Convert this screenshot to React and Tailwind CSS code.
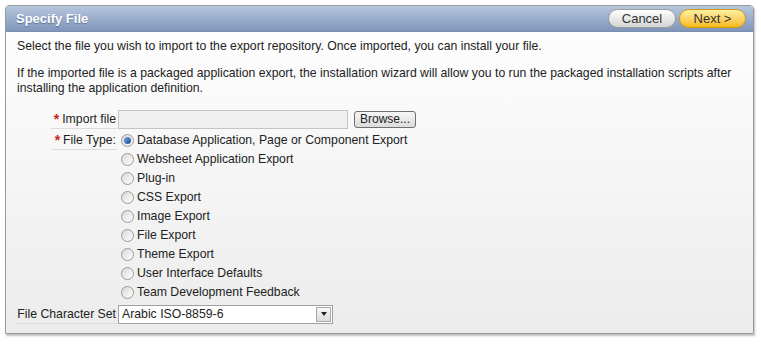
import React from "react";

const options = [
  "Database Application, Page or Component Export",
  "Websheet Application Export",
  "Plug-in",
  "CSS Export",
  "Image Export",
  "File Export",
  "Theme Export",
  "User Interface Defaults",
  "Team Development Feedback",
];

function Radio({ checked }) {
  return (
    <span className="relative inline-flex h-[13px] w-[13px] shrink-0 items-center justify-center rounded-full border border-[#9a9a9a] bg-gradient-to-br from-[#d8d8d8] to-[#ffffff]">
      {checked && (
        <span className="h-[7px] w-[7px] rounded-full bg-gradient-to-br from-[#6fa2e0] to-[#1c4f9c]" />
      )}
    </span>
  );
}

function Label({ children, req }) {
  return (
    <span className="inline-flex items-center border-b border-[#dcdcdc] pl-[3px] pr-[1px] leading-[18px]">
      {req && <span className="mr-[3px] text-[14px] font-bold leading-[10px] text-[#c81e1e]">*</span>}
      {children}
    </span>
  );
}

export default function App() {
  return (
    <div className="min-h-[345px] w-[761px] bg-white pt-[5px] pl-[5px] text-[12.25px] text-[#222]" style={{ fontFamily: '"Liberation Sans", Arial, sans-serif' }}>
      <div className="w-[749px] rounded-t-[4px] border border-[#9a9a9a] bg-gradient-to-b from-[#ffffff] to-[#ececec] shadow-[1px_2px_2px_rgba(0,0,0,0.25)]">
        <div className="flex h-[26px] items-center justify-between rounded-t-[3px] border-b border-[#7a8eae] bg-gradient-to-b from-[#b7c6de] to-[#7f96ba] pl-[10px] pr-[7px]">
          <span className="text-[13px] font-bold text-white [text-shadow:0_1px_1px_rgba(40,60,100,0.5)]">Specify File</span>
          <div className="flex gap-[3px]">
            <button className="flex h-[19px] w-[68px] items-center justify-center rounded-full border border-[#9c9c9c] bg-gradient-to-b from-[#ffffff] to-[#d4d4d4] text-[13px] text-[#333]">Cancel</button>
            <button className="flex h-[19px] w-[67px] items-center justify-center rounded-full border border-[#d19a1a] bg-gradient-to-b from-[#fff0a0] to-[#f7b900] text-[13px] text-[#333]">Next &gt;</button>
          </div>
        </div>
        <div className="pt-[7px] pb-[7px] pl-[11px] pr-[8px]">
          <p className="mb-[12px] leading-[15px]">Select the file you wish to import to the export repository. Once imported, you can install your file.</p>
          <p className="mb-[11px] leading-[15px]">If the imported file is a packaged application export, the installation wizard will allow you to run the packaged installation scripts after installing the application definition.</p>
          <div className="grid grid-cols-[100px_1fr]">
            <div className="flex h-[24px] items-center justify-end">
              <Label req>Import file</Label>
            </div>
            <div className="flex h-[24px] items-center pl-[1px]">
              <div className="h-[19px] w-[230px] border border-[#c4c4c4] bg-[#f0f0f0]" />
              <button className="ml-[6px] flex h-[17px] w-[62px] items-center justify-center rounded-[3px] border border-[#707070] bg-gradient-to-b from-[#f6f6f6] to-[#dcdcdc] text-[12px] text-[#222]">Browse...</button>
            </div>
            <div className="flex h-[19px] items-center justify-end">
              <Label req>File Type:</Label>
            </div>
            <div className="flex flex-col">
              {options.map((o, i) => (
                <div key={o} className="flex h-[19px] items-center gap-[3px] pl-[4px]">
                  <Radio checked={i === 0} />
                  <span>{o}</span>
                </div>
              ))}
            </div>
            <div className="flex h-[24px] items-center justify-end">
              <span className="border-b border-[#dcdcdc] pr-[1px] leading-[18px]">File Character Set</span>
            </div>
            <div className="flex h-[24px] items-center pl-[1px]">
              <div className="flex h-[19px] w-[215px] items-center justify-between border border-[#a0a0a0] bg-white pl-[3px] pr-[1px]">
                <span>Arabic ISO-8859-6</span>
                <span className="flex h-[15px] w-[15px] items-center justify-center border border-[#a8a8a8] bg-gradient-to-b from-[#f8f8f8] to-[#dcdcdc]">
                  <span className="h-0 w-0 border-x-[3.5px] border-t-[4px] border-x-transparent border-t-[#222]" />
                </span>
              </div>
            </div>
          </div>
        </div>
      </div>
    </div>
  );
}
